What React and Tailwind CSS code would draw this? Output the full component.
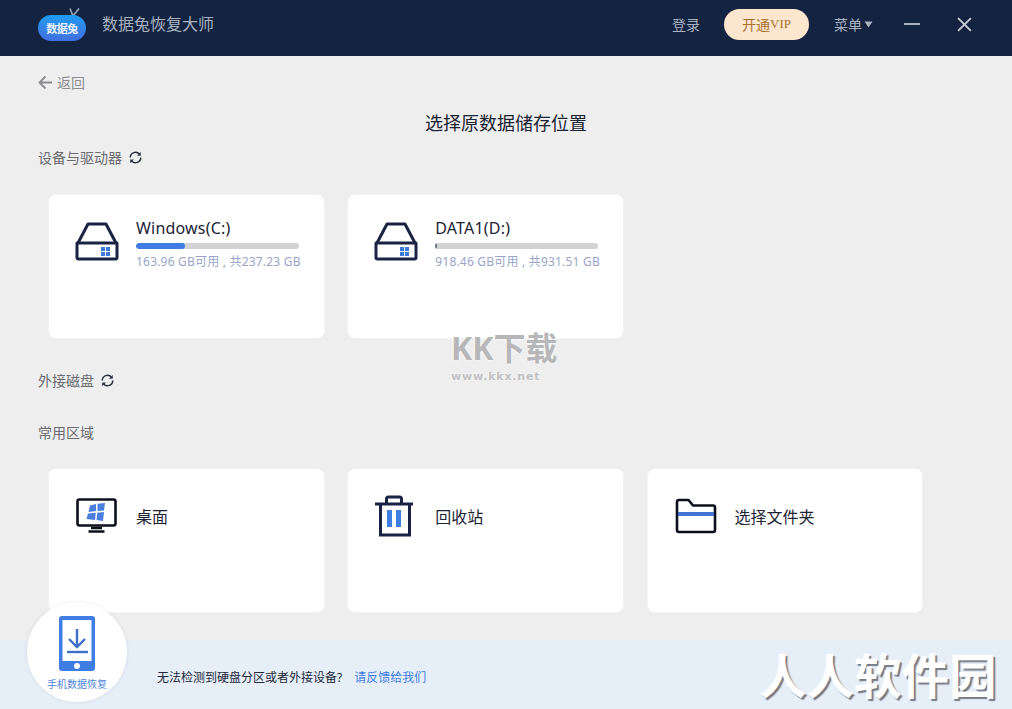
import React from "react";

function Logo() {
  return (
    <div className="relative w-[50px] h-[36px] shrink-0">
      <svg className="absolute left-[30px] top-[2px]" width="14" height="9" viewBox="0 0 14 9" fill="none">
        <path d="M3 0.500 L6 8 M12 0.500 L6 8" stroke="#8fa3b8" strokeWidth="1.700" />
      </svg>
      <div className="absolute left-[1px] top-[9px] w-[48px] h-[26px] rounded-[13px] bg-gradient-to-b from-[#1d9bf0] to-[#3f6fe0] flex items-center justify-center text-[#e8f2ff] text-[11px] font-bold leading-none tracking-[-0.5px]">
        数据兔
      </div>
    </div>
  );
}

function Refresh() {
  return (
    <svg width="15" height="15" viewBox="0 0 16 16" fill="none" className="ml-[6px]">
      <path d="M2.400 8a5.600 5.600 0 0 1 9.800-3.700" stroke="#2b3040" strokeWidth="1.600" />
      <path d="M13.600 8A5.600 5.600 0 0 1 3.800 11.700" stroke="#2b3040" strokeWidth="1.600" />
      <path d="M13.600 2v4h-4z" fill="#2b3040" />
      <path d="M2.400 14v-4h4z" fill="#2b3040" />
    </svg>
  );
}

function DriveIcon() {
  return (
    <svg width="44" height="40" viewBox="0 0 44 40" fill="none" className="mt-[3px]">
      <path d="M3 22 L13 3 H31 L41 22" stroke="#1a2344" strokeWidth="3" strokeLinejoin="round" />
      <path d="M2 22 H42 V36.500 a1.500 1.500 0 0 1 -1.500 1.500 H3.500 a1.500 1.500 0 0 1 -1.500 -1.500 Z" fill="#fff" stroke="#1a2344" strokeWidth="3" strokeLinejoin="round" />
      <rect x="26" y="26" width="4" height="4" fill="#3b78d8" />
      <rect x="31" y="26" width="4" height="4" fill="#3b78d8" />
      <rect x="26" y="31" width="4" height="4" fill="#3b78d8" />
      <rect x="31" y="31" width="4" height="4" fill="#3b78d8" />
    </svg>
  );
}

function MonitorIcon() {
  return (
    <svg width="42" height="36" viewBox="0 0 42 36" fill="none" className="mt-[6px]">
      <rect x="1.500" y="1.500" width="38" height="26" rx="2" fill="#fff" stroke="#0c0f1c" strokeWidth="2.600" />
      <path d="M15 30h11M12.500 33.500h16" stroke="#0c0f1c" strokeWidth="2.400" />
      <path d="M14 7.500 L20 6 V13 L12.500 14 Z M21.500 5.800 L29 5 L28 12.500 L21.500 13 Z M12 15.500 L19.800 14.800 L19 22 L10.500 21 Z M21.200 14.700 L28 14 L27 23 L20.500 22 Z" fill="#4a7fe0" />
    </svg>
  );
}

function TrashIcon() {
  return (
    <svg width="44" height="44" viewBox="0 0 44 44" fill="none" className="mt-[2px]">
      <path d="M1 10 H39" stroke="#1a2344" strokeWidth="3" />
      <path d="M12.500 10 V5 a2 2 0 0 1 2 -2 H25.500 a2 2 0 0 1 2 2 V10" stroke="#1a2344" strokeWidth="3" />
      <path d="M6.500 10 V41 H35.500 V10" stroke="#1a2344" strokeWidth="3" />
      <rect x="13" y="16" width="5" height="17" fill="#3f7fe4" />
      <rect x="22" y="16" width="5" height="17" fill="#3f7fe4" />
    </svg>
  );
}

function FolderIcon() {
  return (
    <svg width="42" height="36" viewBox="0 0 42 36" fill="none" className="mt-[6px]">
      <path d="M2 4 a2 2 0 0 1 2 -2 H13.500 L18 7.500 H38 a2 2 0 0 1 2 2 V32 a2 2 0 0 1 -2 2 H4 a2 2 0 0 1 -2 -2 Z" fill="#fff" stroke="#0c0f1c" strokeWidth="2.600" strokeLinejoin="round" />
      <rect x="3" y="14" width="36" height="4" fill="#3f74d6" />
    </svg>
  );
}

function Card({ icon, children }) {
  return (
    <div className="w-[276.500px] h-[145px] bg-white rounded-[8px] border border-[#f3f3f5] flex items-start pl-[26px] pt-[23px]">
      <div className="w-[44px] shrink-0 flex justify-center">{icon}</div>
      <div className="ml-[17px] flex-1 min-w-0">{children}</div>
    </div>
  );
}

function Drive({ name, pct, fill, info }) {
  return (
    <Card icon={<DriveIcon />}>
      <div className="text-[16px] leading-[22px] mt-[-1px] tracking-[0.2px] text-[#1c2333]">{name}</div>
      <div className="w-[163px] h-[6px] mt-[4px] rounded-full bg-[#d3d3d6] overflow-hidden">
        <div className={`h-full rounded-full ${fill}`} style={{ width: `${pct}%` }} />
      </div>
      <div className="mt-[4px] text-[12px] leading-[18px] tracking-[0.2px] text-[#9aa5c9] whitespace-nowrap">{info}</div>
    </Card>
  );
}

function Place({ icon, label }) {
  return (
    <Card icon={icon}>
      <div className="text-[16px] leading-[22px] mt-[14px] text-[#1c2333]">{label}</div>
    </Card>
  );
}

export default function App() {
  return (
    <div className="relative w-[1012px] h-[709px] overflow-hidden bg-[#eeeeef] flex flex-col font-['Noto_Sans','Noto_Sans_CJK_SC',sans-serif]">
      <header className="h-[56px] shrink-0 bg-[#14233f] flex items-center pl-[37px] pb-[8px]">
        <Logo />
        <div className="ml-[15px] text-[16px] text-[#a9b3c2]">数据兔恢复大师</div>
        <div className="ml-auto flex items-center">
          <span className="text-[14px] text-[#a9b3c2]">登录</span>
          <div className="ml-[24px] w-[85px] h-[31px] rounded-full bg-[#fde6ce] flex items-center justify-center text-[14px] text-[#a8702f]">
            开通<span className="font-['Liberation_Serif',serif] text-[13px]">VIP</span>
          </div>
          <span className="ml-[25px] text-[14px] text-[#a9b3c2]">菜单</span>
          <svg width="9" height="7" viewBox="0 0 9 7" className="ml-[2px]"><path d="M0.500 0.500 H8.500 L4.500 6.500 Z" fill="#a9b3c2" /></svg>
          <div className="ml-[31px] w-[16px] h-[2px] bg-[#a9b3c2]" />
          <svg width="15" height="15" viewBox="0 0 14 14" className="ml-[37px] mr-[40px]" fill="none">
            <path d="M1 1 L13 13 M13 1 L1 13" stroke="#c3cad6" strokeWidth="1.800" />
          </svg>
        </div>
      </header>

      <main className="flex-1 pl-[38px] flex flex-col">
        <div className="h-[20px] mt-[16px] flex items-center">
          <svg width="15" height="15" viewBox="0 0 15 15" fill="none">
            <path d="M14 7.500 H2 M7.500 1.500 L1.500 7.500 L7.500 13.500" stroke="#8b8b8f" strokeWidth="1.800" />
          </svg>
          <span className="ml-[4px] text-[14px] text-[#8c8c90]">返回</span>
        </div>
        <h1 className="mt-[19px] h-[24px] leading-[24px] text-[18px] font-normal text-center text-[#1c2333] pr-[38px]">选择原数据储存位置</h1>
        <div className="mt-[12px] h-[20px] flex items-center text-[14px] text-[#6b6b70]">
          设备与驱动器<Refresh />
        </div>
        <div className="mt-[27px] ml-[10px] flex gap-[22.750px]">
          <Drive name="Windows(C:)" pct={30} fill="bg-[#3f7ce4]" info="163.96 GB可用 , 共237.23 GB" />
          <Drive name="DATA1(D:)" pct={1} fill="bg-[#6f7685]" info="918.46 GB可用 , 共931.51 GB" />
        </div>
        <div className="mt-[31.500px] h-[20px] flex items-center text-[14px] text-[#6b6b70]">
          外接磁盘<Refresh />
        </div>
        <div className="mt-[32px] h-[20px] flex items-center text-[14px] text-[#6b6b70]">常用区域</div>
        <div className="mt-[25.500px] ml-[10px] flex gap-[22.750px]">
          <Place icon={<MonitorIcon />} label="桌面" />
          <Place icon={<TrashIcon />} label="回收站" />
          <Place icon={<FolderIcon />} label="选择文件夹" />
        </div>
      </main>

      <footer className="h-[69px] shrink-0 bg-[#e6eff8] flex items-center pl-[157px] pt-[6px] text-[12px]">
        <span className="text-[#23283a]">无法检测到硬盘分区或者外接设备?</span>
        <span className="ml-[12px] text-[#3f7ce4]">请反馈给我们</span>
      </footer>

      <div className="absolute left-[27px] top-[602px] w-[100px] h-[100px] rounded-full bg-white shadow-[0_0_4px_rgba(0,0,0,0.08)] flex flex-col items-center pt-[14px]">
        <svg width="36" height="55" viewBox="0 0 36 55" fill="none">
          <rect width="36" height="55" rx="3" fill="#3f7ce4" />
          <rect x="3.500" y="4" width="29" height="41" fill="#fff" />
          <circle cx="18" cy="50" r="3" fill="#fff" />
          <path d="M18 13 V31 M10 23 L18 31 L26 23" stroke="#3f6fc8" strokeWidth="2.400" />
          <path d="M8 36 H29" stroke="#3f6fc8" strokeWidth="2.400" />
        </svg>
        <div className="mt-[7px] text-[10px] leading-[12px] text-[#4f84dc]">手机数据恢复</div>
      </div>

      <div className="absolute left-[451px] top-[330px] w-[116px] pointer-events-none">
        <div className="text-[32px] leading-[36px] font-bold text-[#b7b7b9] whitespace-nowrap [text-shadow:0_0_3px_#ffffff]">KK下载</div>
        <div className="mt-[4px] text-[11px] leading-[14px] font-bold tracking-[0.8px] text-[#c0c0c2] font-['DejaVu_Sans',sans-serif] [text-shadow:0_0_2px_#ffffff]">www.kkx.net</div>
      </div>

      <div className="absolute left-[759px] top-[647px] text-[47.500px] leading-[58px] font-bold text-white [text-shadow:2px_2px_1px_#777b85] whitespace-nowrap pointer-events-none">
        人人软件园
      </div>
    </div>
  );
}
